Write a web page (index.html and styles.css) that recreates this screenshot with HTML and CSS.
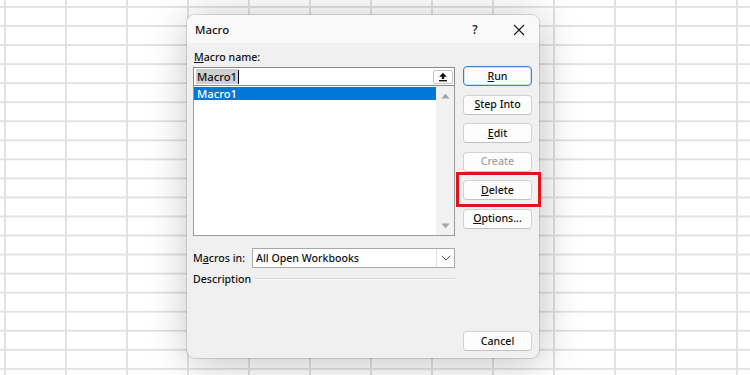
FILE: index.html
```html
<!DOCTYPE html>
<html>
<head>
<meta charset="utf-8">
<link rel="stylesheet" href="styles.css">
</head>
<body>
<div class="dialog">
  <div class="titlebar">
    <span class="title">Macro</span>
    <span class="help">?</span>
    <span class="close"><svg width="12" height="12" viewBox="0 0 12 12"><path d="M1 1L11 11M11 1L1 11" stroke="#1a1a1a" stroke-width="1.1" fill="none"/></svg></span>
  </div>
  <div class="content">
    <div class="main">
      <div class="label"><u>M</u>acro name:</div>
      <div class="namebox">
        <span class="sel">Macro1</span><span class="caret"></span>
        <span class="upbtn"><svg width="10" height="10" viewBox="0 0 10 10"><path d="M5 0.8L1.2 4.8H3.8V7H6.2V4.8H8.8Z" fill="#111"/><rect x="1" y="8" width="8" height="1.4" fill="#111"/></svg></span>
      </div>
      <div class="list">
        <div class="items"><div class="item selected">Macro1</div></div>
        <div class="scroll">
          <svg width="9" height="6" viewBox="0 0 9 6"><path d="M4.5 0.5L8.5 5.5H0.5Z" fill="#a6a6a6"/></svg>
          <svg width="9" height="6" viewBox="0 0 9 6"><path d="M4.5 5.5L8.5 0.5H0.5Z" fill="#a6a6a6"/></svg>
        </div>
      </div>
      <div class="inrow">
        <span class="inlabel">M<u>a</u>cros in:</span>
        <div class="combo">
          <span class="combotext">All Open Workbooks</span>
          <span class="drop"><svg width="10" height="6" viewBox="0 0 10 6"><path d="M0.8 0.8L5 5L9.2 0.8" stroke="#555" stroke-width="1" fill="none"/></svg></span>
        </div>
      </div>
      <div class="descrow"><span>Description</span><span class="rule"></span></div>
    </div>
    <div class="side">
      <button class="btn default"><u>R</u>un</button>
      <button class="btn"><u>S</u>tep Into</button>
      <button class="btn"><u>E</u>dit</button>
      <button class="btn disabled">Create</button>
      <div class="hl-wrap"><button class="btn"><u>D</u>elete</button><span class="highlight"></span></div>
      <button class="btn"><u>O</u>ptions...</button>
      <button class="btn cancel">Cancel</button>
    </div>
  </div>
</div>
</body>
</html>
```
FILE: styles.css
```css
html, body {
  margin: 0;
  padding: 0;
}
body {
  width: 750px;
  height: 375px;
  overflow: hidden;
  background-color: #ffffff;
  background-image:
    linear-gradient(to right, #e2e2e2 2px, transparent 2px),
    linear-gradient(to bottom, #e2e2e2 2px, transparent 2px);
  background-size: 61px 100%, 100% 19.06px;
  background-position: 4px 0, 0 6px;
  font-family: "Noto Sans", "Open Sans", sans-serif;
  font-size: 10.6px;
  font-weight: 500;
  color: #111;
  padding-top: 15px;
  padding-left: 187px;
  box-sizing: border-box;
}
.dialog {
  width: 352px;
  height: 343px;
  background: #f0f0f0;
  border-radius: 8px;
  box-shadow: 0 0 0 1px rgba(0,0,0,0.12), 2px 4px 40px rgba(0,0,0,0.25);
  display: flex;
  flex-direction: column;
}
.titlebar {
  height: 28px;
  background: #f9f9f9;
  border-radius: 8px 8px 0 0;
  display: flex;
  align-items: center;
  padding-left: 8px;
  padding-top: 1px;
  box-sizing: border-box;
}
.title {
  font-size: 11.4px;
  flex: 1;
}
.help {
  font-size: 12px;
  width: 20px;
  text-align: center;
  margin-right: 24px;
}
.close {
  width: 20px;
  display: flex;
  justify-content: center;
  margin-right: 10px;
}
.content {
  flex: 1;
  display: flex;
  padding: 0 7px 7px 6px;
  gap: 8px;
}
.main {
  width: 262px;
  display: flex;
  flex-direction: column;
}
.label {
  margin-top: 7px;
  height: 17px;
  line-height: 15px;
  padding-left: 1px;
}
.namebox {
  height: 19px;
  box-sizing: border-box;
  border: 1px solid #8a8a8a;
  background: #fff;
  display: flex;
  align-items: center;
  padding-left: 2px;
  position: relative;
  z-index: 1;
}
.sel {
  background: #cfcfcf;
  line-height: 15px;
  padding: 0 1px;
  font-size: 11.2px;
}
.caret {
  width: 1px;
  height: 14px;
  background: #000;
}
.upbtn {
  margin-left: auto;
  margin-right: 1px;
  width: 20px;
  height: 14px;
  box-sizing: border-box;
  border: 1px solid #c4c4c4;
  border-radius: 2px;
  background: #fdfdfd;
  display: flex;
  align-items: center;
  justify-content: center;
}
.list {
  margin-top: -1px;
  height: 151px;
  box-sizing: border-box;
  border: 1px solid #9a9a9a;
  background: #fff;
  display: flex;
}
.items {
  flex: 1;
  padding-top: 1px;
}
.item {
  height: 13px;
  line-height: 13px;
  padding-left: 3px;
  font-size: 11.2px;
}
.item.selected {
  background: #0078d7;
  color: #fff;
}
.scroll {
  width: 18px;
  background: #f2f2f2;
  display: flex;
  flex-direction: column;
  align-items: center;
  justify-content: space-between;
  padding: 7px 0 6px;
}
.inrow {
  margin-top: 12px;
  height: 20px;
  display: flex;
  align-items: center;
}
.inlabel {
  width: 59px;
}
.combo {
  flex: 1;
  height: 20px;
  box-sizing: border-box;
  border: 1px solid #a8a8a8;
  background: #fff;
  display: flex;
  align-items: center;
}
.combotext {
  flex: 1;
  padding-left: 3px;
}
.drop {
  width: 17px;
  height: 18px;
  border-left: 1px solid #e0e0e0;
  display: flex;
  align-items: center;
  justify-content: center;
}
.descrow {
  margin-top: 4px;
  height: 14px;
  display: flex;
  align-items: center;
  line-height: 14px;
}
.rule {
  flex: 1;
  margin-left: 4px;
  border-top: 1px solid #d6d6d6;
  border-bottom: 1px solid #fafafa;
  margin-top: -1px;
}
.side {
  width: 69px;
  display: flex;
  flex-direction: column;
  gap: 8.6px;
  padding-top: 23px;
}
.btn {
  width: 69px;
  height: 20px;
  box-sizing: border-box;
  border: 1px solid #d2d2d2;
  border-bottom-color: #c2c2c2;
  border-radius: 4px;
  background: #fdfdfd;
  font-family: inherit;
  font-size: 10.6px;
  font-weight: 500;
  color: #111;
  padding: 0;
  line-height: 17px;
}
.btn.default {
  border: 1px solid #3b7fcb;
  box-shadow: inset 0 0 0 1px #d3e3f5;
}
.btn.disabled {
  color: #a3a3a3;
}
.btn.cancel {
  margin-top: auto;
}
.hl-wrap {
  position: relative;
  height: 20px;
}
.highlight {
  position: absolute;
  left: -7px;
  top: -8px;
  width: 85px;
  height: 35px;
  box-sizing: border-box;
  border: 3px solid #e3131b;
}
```
